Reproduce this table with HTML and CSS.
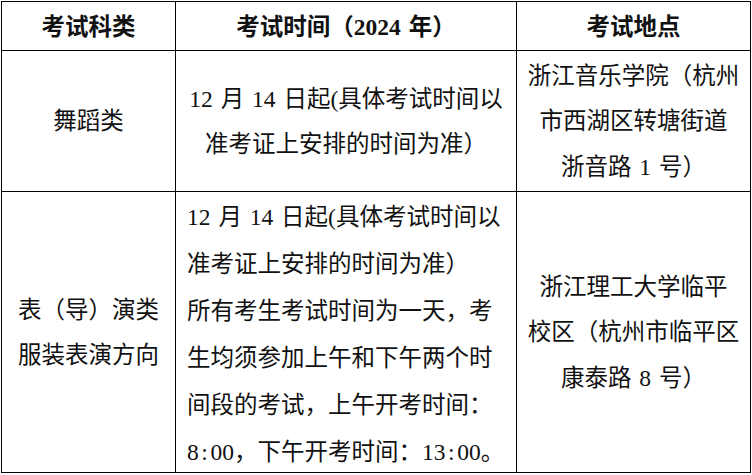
FILE: index.html
```html
<!DOCTYPE html>
<html lang="zh-CN">
<head>
<meta charset="utf-8">
<title>考试安排</title>
<link rel="stylesheet" href="styles.css">
</head>
<body>
<div class="table">
  <div class="cell head"><div class="txt">考试科类</div></div>
  <div class="cell head"><div class="txt">考试时间（2024 年）</div></div>
  <div class="cell head"><div class="txt">考试地点</div></div>

  <div class="cell"><div class="txt">舞蹈类</div></div>
  <div class="cell"><div class="txt">12 月 14 日起(具体考试时间以<br>准考证上安排的时间为准）</div></div>
  <div class="cell"><div class="txt">浙江音乐学院（杭州<br>市西湖区转塘街道<br>浙音路 1 号）</div></div>

  <div class="cell"><div class="txt">表（导）演类<br>服装表演方向</div></div>
  <div class="cell left"><div class="txt tall">12 月 14 日起(具体考试时间以<br>准考证上安排的时间为准）<br>所有考生考试时间为一天，考<br>生均须参加上午和下午两个时<br>间段的考试，上午开考时间：<br>8<span class="colon">:</span>00，下午开考时间：13<span class="colon">:</span>00。</div></div>
  <div class="cell"><div class="txt">浙江理工大学临平<br>校区（杭州市临平区<br>康泰路 8 号）</div></div>
</div>
</body>
</html>
```

FILE: styles.css
```css
html, body {
  margin: 0;
  padding: 0;
  background: #ffffff;
}

body {
  font-family: "Liberation Serif", "Noto Sans CJK SC", serif;
  font-size: 23.5px;
  color: #111111;
  word-spacing: 2px;
}

.table {
  display: grid;
  grid-template-columns: 174px 341px 234px;
  grid-template-rows: 49px 141px 281px;
  margin: 1px 0 0 1px;
  width: 749px;
  border-left: 1px solid #000;
  border-top: 1px solid #000;
}

.cell {
  border-right: 1px solid #000;
  border-bottom: 1px solid #000;
  display: flex;
  align-items: center;
  justify-content: center;
  text-align: center;
  white-space: nowrap;
  overflow: hidden;
}

.txt {
  line-height: 45.5px;
  padding-top: 2px;
}

.head .txt {
  font-weight: 700;
  line-height: 30px;
  padding-top: 2px;
}

.left {
  justify-content: flex-start;
  text-align: left;
  padding-left: 11px;
}

.tall {
  line-height: 47px;
  padding-top: 5px;
}

.colon {
  display: inline-block;
  width: 0.5em;
  text-align: center;
}
```
